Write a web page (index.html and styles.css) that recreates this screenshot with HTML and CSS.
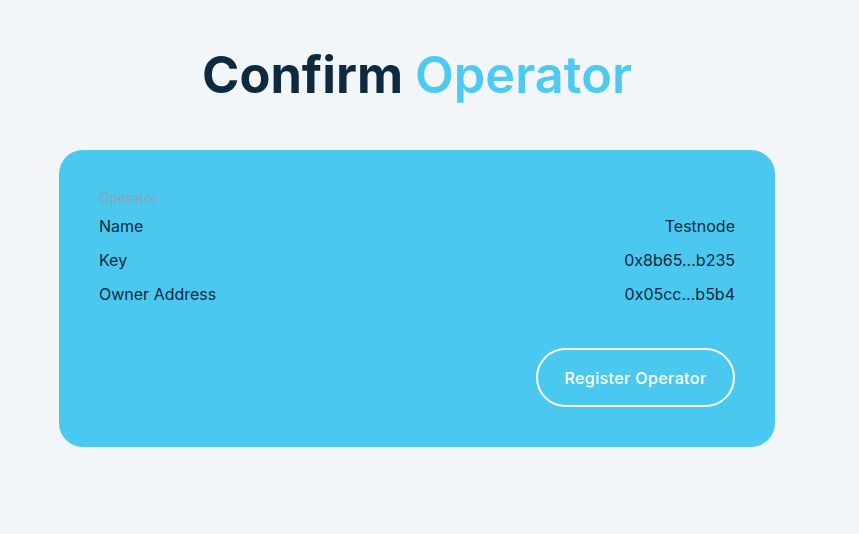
FILE: index.html
```html
<!DOCTYPE html>
<html>
<head>
<meta charset="utf-8">
<link rel="stylesheet" href="styles.css">
</head>
<body>
<main class="page">
  <h1 class="title"><span class="dark">Confirm</span> <span class="accent">Operator</span></h1>
  <section class="card">
    <div class="label">Operator</div>
    <div class="rows">
      <div class="row"><span>Name</span><span>Testnode</span></div>
      <div class="row"><span>Key</span><span>0x8b65...b235</span></div>
      <div class="row"><span>Owner Address</span><span>0x05cc...b5b4</span></div>
    </div>
    <div class="actions">
      <button class="btn">Register Operator</button>
    </div>
  </section>
</main>
</body>
</html>
```
FILE: styles.css
```css
html, body {
  margin: 0;
  padding: 0;
  background: #f3f6f9;
  font-family: Inter, "Noto Sans", sans-serif;
}
.page {
  width: 716px;
  margin-left: 59px;
  padding-top: 42px;
}
.title {
  margin: 0 0 42px 0;
  text-align: center;
  font-size: 50.5px;
  font-weight: 700;
  line-height: 66px;
  letter-spacing: 0;
}
.dark { color: #0e2a3e; }
.accent { color: #4ecaf1; font-weight: 600; }
.card {
  background: #4bc8f0;
  border-radius: 24px;
  padding: 40px 40px 40px 40px;
  height: 297px;
  box-sizing: border-box;
  display: flex;
  flex-direction: column;
}
.label {
  font-size: 14px;
  line-height: 16px;
  color: #8aa3b6;
  margin-bottom: 10px;
}
.rows {
  display: flex;
  flex-direction: column;
  gap: 14px;
}
.row {
  display: flex;
  justify-content: space-between;
  font-size: 16px;
  line-height: 20px;
  color: #10293d;
}
.actions {
  margin-top: auto;
  display: flex;
  justify-content: flex-end;
}
.btn {
  width: 199px;
  height: 59px;
  border: 2px solid #ffffff;
  border-radius: 30px;
  background: transparent;
  color: #ffffff;
  font-family: Inter, "Noto Sans", sans-serif;
  font-size: 16px;
  font-weight: 500;
  letter-spacing: 0.4px;
}
```
